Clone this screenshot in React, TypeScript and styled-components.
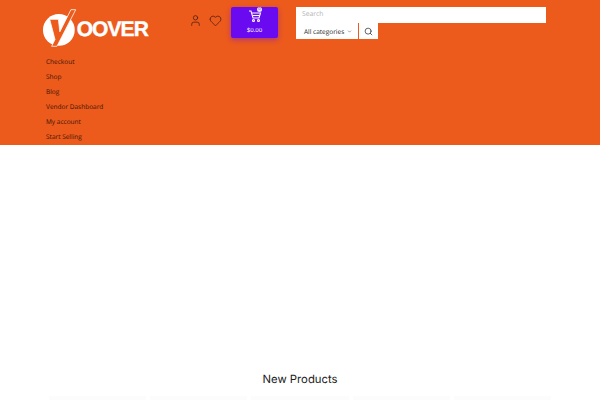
import styled, { createGlobalStyle } from "styled-components";
import { Search, User, Heart, ChevronDown } from "lucide-react";

const GlobalStyle = createGlobalStyle`
  html, body {
    margin: 0;
    padding: 0;
    height: 400px;
    background: #fff;
    font-family: "Open Sans", "Liberation Sans", sans-serif;
    text-rendering: geometricPrecision;
    overflow: hidden;
  }
`;

const Header = styled.header`
  background-color: #ec5a1c;
  height: 145px;
  padding: 7px 54px 0 42px;
  box-sizing: border-box;
  overflow: hidden;
`;

const TopRow = styled.div`
  display: flex;
  align-items: flex-start;
  height: 47px;
`;

const Logo = styled.div`
  display: flex;
  align-items: flex-start;
  width: 106px;
  flex-shrink: 0;
`;

const LogoWord = styled.span`
  font-family: "Liberation Sans", sans-serif;
  font-weight: 700;
  font-size: 21px;
  letter-spacing: -0.9px;
  line-height: 24px;
  color: #fff;
  margin: 11px 0 0 -1px;
  -webkit-text-stroke: 0.4px #fff;
`;

const IconLinks = styled.div`
  display: flex;
  align-items: center;
  gap: 7px;
  margin: 7px 0 0 41px;
  color: #3b1a12;
`;

const CartButton = styled.div`
  width: 47px;
  height: 31px;
  margin-left: 9px;
  box-sizing: border-box;
  background-color: #6a0af0;
  border-radius: 2px;
  box-shadow: 0 2px 5px rgba(106, 10, 240, 0.45);
  display: flex;
  flex-direction: column;
  align-items: center;
  color: #fff;
  position: relative;
  padding-top: 2px;
`;

const CartCount = styled.span`
  position: absolute;
  top: 0;
  right: 16px;
  width: 5px;
  height: 5px;
  border-radius: 50%;
  background: #efe6ff;
  color: #6a0af0;
  font-size: 4px;
  line-height: 5px;
  text-align: center;
`;

const CartTotal = styled.span`
  font-family: "Inter", sans-serif;
  font-size: 5.6px;
  line-height: 8px;
  margin-top: 4px;
`;

const SearchArea = styled.div`
  margin-left: 18px;
  width: 250px;
`;

const SearchInput = styled.div`
  height: 16px;
  background: #fff;
  font-size: 6.8px;
  line-height: 14px;
  padding-left: 6px;
  color: #b5b5b5;
`;

const SearchControls = styled.div`
  display: flex;
  height: 16px;
`;

const CategorySelect = styled.div`
  width: 62px;
  padding: 0 6px 0 8px;
  background: #fff;
  font-size: 6.5px;
  color: #222;
  display: flex;
  align-items: center;
  justify-content: space-between;
  white-space: nowrap;
  box-sizing: border-box;
`;

const SearchButton = styled.div`
  width: 19px;
  margin-left: 1px;
  background: #fff;
  display: flex;
  align-items: center;
  justify-content: center;
  color: #333;
`;

const Menu = styled.nav`
  display: flex;
  flex-direction: column;
  padding: 0 0 0 4px;
`;

const MenuLink = styled.a`
  font-size: 6.5px;
  line-height: 15.05px;
  color: #3b1408;
`;

const Section = styled.section`
  display: flex;
  flex-direction: column;
  align-items: center;
  padding-top: 227px;
`;

const SectionTitle = styled.h2`
  margin: 0;
  font-family: "Inter", sans-serif;
  font-size: 11.3px;
  font-weight: 400;
  line-height: 14px;
  color: #222;
`;

const ProductRow = styled.div`
  display: flex;
  gap: 4px;
  margin-top: 10px;
  width: 502px;
`;

const ProductCard = styled.div`
  flex: 1;
  height: 4px;
  background: #fcfcfc;
`;

const menuItems = ["Checkout", "Shop", "Blog", "Vendor Dashboard", "My account", "Start Selling"];

export default function App() {
  return (
    <>
      <GlobalStyle />
      <Header>
        <TopRow>
          <Logo>
            <svg width="37" height="41" viewBox="0 0 37 41">
              <circle cx="17.5" cy="23" r="16.5" fill="#fff" />
              <path d="M8 12h9l1.5 13L30 2h5L15.5 40H10l3.5-7z" fill="#ec5a1c" stroke="#fff" strokeWidth="0.8" />
            </svg>
            <LogoWord>OOVER</LogoWord>
          </Logo>
          <IconLinks>
            <User size={13} strokeWidth={1.3} />
            <Heart size={13} strokeWidth={1.3} />
          </IconLinks>
          <CartButton>
            <CartCount>0</CartCount>
            <svg width="14" height="14" viewBox="0 0 14 14" fill="none" stroke="currentColor" strokeWidth="1.1">
              <path d="M1 2h2l2 7h6l1.5-5H3.6" />
              <path d="M5 6.5h6.5" />
              <circle cx="5.5" cy="11.5" r="1" />
              <circle cx="10.5" cy="11.5" r="1" />
            </svg>
            <CartTotal>$0.00</CartTotal>
          </CartButton>
          <SearchArea>
            <SearchInput>Search</SearchInput>
            <SearchControls>
              <CategorySelect>
                All categories
                <ChevronDown size={5} />
              </CategorySelect>
              <SearchButton>
                <Search size={9} />
              </SearchButton>
            </SearchControls>
          </SearchArea>
        </TopRow>
        <Menu>
          {menuItems.map((item) => (
            <MenuLink key={item}>{item}</MenuLink>
          ))}
        </Menu>
      </Header>
      <Section>
        <SectionTitle>New Products</SectionTitle>
        <ProductRow>
          {[1, 2, 3, 4, 5].map((n) => (
            <ProductCard key={n} />
          ))}
        </ProductRow>
      </Section>
    </>
  );
}
